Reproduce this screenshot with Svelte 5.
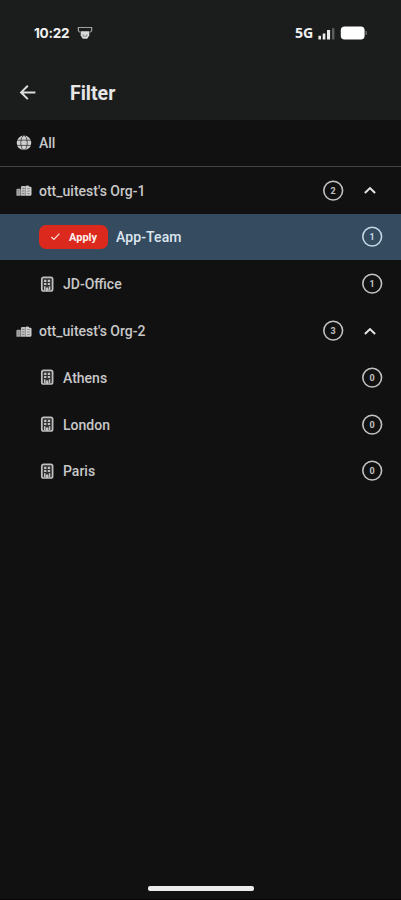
<script>
  const groups = [
    { name: "ott_uitest's Org-1", count: 2, items: [
      { name: 'App-Team', count: 1, selected: true },
      { name: 'JD-Office', count: 1 }
    ] },
    { name: "ott_uitest's Org-2", count: 3, items: [
      { name: 'Athens', count: 0 },
      { name: 'London', count: 0 },
      { name: 'Paris', count: 0 }
    ] }
  ];
</script>

{#snippet badge(count)}
  <svg class="count" width="21" height="21" viewBox="0 0 21 21">
    <circle cx="10.2" cy="10.6" r="9.4" fill="none" stroke="currentColor" stroke-width="1.6" />
    <text x="10.2" y="14" text-anchor="middle" fill="currentColor">{count}</text>
  </svg>
{/snippet}

<div class="screen">
  <header>
    <div class="status">
      <span class="time">10:22</span>
      <svg class="cast" width="16" height="14" viewBox="0 0 16 14">
        <path d="M3 6.4 1.4 4.8V1.5h13.2v3.3L13 6.4" fill="none" stroke="#a0a2a1" stroke-width="1.2" />
        <path d="M3.7 5.2h8.6v4.4L10.2 12.8H5.8L3.7 9.6z" fill="#d9dbda" />
        <path d="M6.2 8.2v2h3.6v-2" fill="none" stroke="#777" stroke-width=".8" />
      </svg>
      <span class="grow"></span>
      <span class="net">5G</span>
      <svg class="signal" width="18" height="13" viewBox="0 0 18 13">
        <path d="M.4 8.8h2.6v3.7H.4zM4.7 6.6h2.7v5.9H4.7zM9 3h3.1v9.5H9z" fill="#e9eae9" />
        <path d="M14 1.2h2.4v11.3H14z" fill="#5c5e5d" />
      </svg>
      <svg class="battery" width="28" height="14" viewBox="0 0 28 14">
        <rect x=".8" y=".5" width="23.8" height="13" rx="3.8" fill="#fff" />
        <path d="M26 5q1.4 2 0 4z" fill="#686a69" stroke="#686a69" />
      </svg>
    </div>
    <div class="title">
      <svg width="18" height="18" viewBox="0 0 18 18" fill="none" stroke="#dcdddc" stroke-width="2">
        <path d="M16.4 8.4H2.5M8.8 1.7 2.1 8.4l6.7 6.7" />
      </svg>
      <h1>Filter</h1>
    </div>
  </header>

  <div class="row all">
    <svg class="icon" width="16" height="16" viewBox="0 0 16 16">
      <circle cx="8" cy="7.8" r="7.3" fill="#d0d0d0" />
      <g fill="none" stroke="#333" stroke-width=".8">
        <ellipse cx="8" cy="7.8" rx="3.2" ry="7.3" />
        <path d="M.8 5.2h14.4M.8 10.4h14.4" />
      </g>
    </svg>
    <span class="label">All</span>
  </div>

  {#each groups as group}
    <div class="row">
      <svg class="icon" width="16" height="16" viewBox="0 0 16 16">
        <path d="M.4 13.7V8q0-1.2 1.2-1.2h3.1v6.9z" fill="#a8a8a8" />
        <path d="M5 13.7V4.9q0-1 1-1h3.8v9.8z" fill="#bcbcbc" />
        <path d="M10 13.7V3.7q2.6-.6 3.4 1h1q1.1 0 1.1 1.1v6.8q0 1.1-1.1 1.1z" fill="#cecece" />
        <path d="M1.8 8.8h1.5M1.8 11.1h1.5M6.2 6.5h2.3M6.2 9h2.3M6.2 11.5h2.3M11.2 6.6h2.6M11.2 9.1h2.6M11.2 11.6h2.6" stroke="#6d6d6d" stroke-width=".75" />
      </svg>
      <span class="label">{group.name}</span>
      <span class="grow"></span>
      {@render badge(group.count)}
      <svg class="chevron" width="12" height="8" viewBox="0 0 12 8">
        <path d="M.9 6.9 6 2.1l5.1 4.8" fill="none" stroke="#e4e4e4" stroke-width="2.1" />
      </svg>
    </div>
    {#each group.items as item}
      <div class="row child" class:selected={item.selected}>
        {#if item.selected}
          <button>
            <svg width="11" height="9" viewBox="0 0 11 9"><path d="m1.4 5 2.5 2.4L9.4 1.7" fill="none" stroke="#ffe4e1" stroke-width="1.2" /></svg>
            <span>Apply</span>
          </button>
        {:else}
          <svg class="building" width="14" height="16" viewBox="0 0 14 16">
            <rect x="1.8" y="1.3" width="10.8" height="13.7" rx="1.8" fill="#303030" stroke="#c0c0c0" stroke-width="1.7" />
            <path d="M4.1 3.8h2.3v2.1H4.1zM7.8 3.8h2.3v2.1H7.8zM4.1 7h2.3v2.1H4.1zM7.8 7h2.3v2.1H7.8zM4 10.3h1.5v3.8H4zM8.8 10.3h1.5v3.8H8.8zM5.9 12q1.2-1.5 2.4 0v3H5.9z" fill="#c0c0c0" />
          </svg>
        {/if}
        <span class="label">{item.name}</span>
        <span class="grow"></span>
        {@render badge(item.count)}
      </div>
    {/each}
  {/each}

  <div class="home"></div>
</div>

<style>
  .screen {
    box-sizing: border-box;
    height: 900px;
    display: flex;
    flex-direction: column;
    background: #111;
    color: #c8c8c8;
    font-family: Roboto, sans-serif;
    border-bottom: 1px solid #080406;
    overflow: hidden;
  }
  header {
    flex: none;
    height: 120px;
    background: #1b1d1c;
  }
  svg { display: block; flex: none; }
  .grow { flex: 1; }
  .status {
    height: 66px;
    display: flex;
    align-items: center;
    padding: 0 33px 0 34px;
    color: #f0f0f0;
  }
  .time {
    width: 36px;
    white-space: nowrap;
    font: 700 13.6px/18px Inter, sans-serif;
    letter-spacing: -.3px;
  }
  .cast { margin: 0 0 0 7px; }
  .net { font: 700 14.2px/18px "Noto Sans", sans-serif; letter-spacing: -.2px; }
  .signal { margin-left: 5px; }
  .battery { margin-left: 4px; }
  .title {
    height: 53px;
    display: flex;
    align-items: center;
    padding-left: 19px;
  }
  h1 {
    margin: 0 0 0 33px;
    padding-top: 2px;
    color: #e6e6e6;
    font-size: 19.5px;
    font-weight: 700;
    line-height: 24px;
  }
  .row {
    box-sizing: border-box;
    flex: none;
    height: 46.8px;
    display: flex;
    align-items: center;
    padding: 0 18px 0 16px;
  }
  .all { border-bottom: 1px solid #414342; }
  .label {
    padding-top: 1px;
    font-size: 14px;
    font-weight: 500;
    line-height: 18px;
  }
  .selected .label { letter-spacing: .1px; }
  .all .label { padding-top: 0; }
  .icon { margin-right: 7px; }
  .count { color: #c2c2c2; }
  .count text { font: 700 9px Roboto, sans-serif; }
  .chevron { margin: 0 7px 0 20px; }
  .child { padding-left: 40px; }
  .building { margin-right: 9px; }
  .selected { background: #344b60; color: #dce6ee; }
  .selected .count { color: #c6d8e6; }
  button {
    width: 69px;
    height: 24px;
    display: flex;
    align-items: center;
    gap: 8px;
    margin: 0 8px 0 -1px;
    padding: 0 0 0 11px;
    border: 0;
    border-radius: 7px;
    background: #db2a1d;
    color: #fff1ef;
    font: 700 11px/14px Roboto, sans-serif;
  }
  button span { padding-top: 2px; }
  .home {
    flex: none;
    width: 106px;
    height: 5px;
    margin: auto auto 8px 148px;
    border-radius: 2px;
    background: #ececec;
  }
</style>
